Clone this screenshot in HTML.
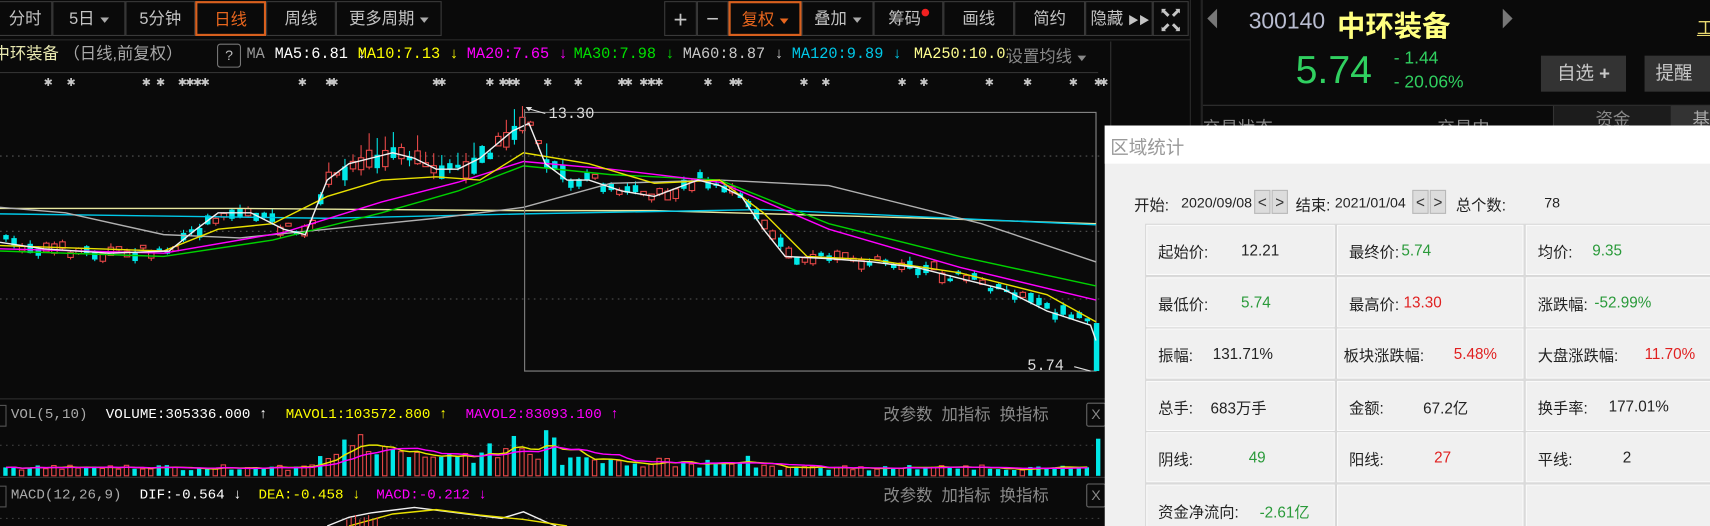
<!DOCTYPE html>
<html><head><meta charset="utf-8">
<style>
html,body{margin:0;padding:0;background:#0a0a0a;width:1710px;height:526px;overflow:hidden}
#s{position:absolute;left:0;top:0;width:1568px;height:482px;transform:scale(1.09056,1.09129);transform-origin:0 0;font-family:"Liberation Sans","Noto Sans CJK SC",sans-serif;background:#0a0a0a;overflow:hidden}
.a{position:absolute;white-space:nowrap}
.btn{position:absolute;top:1px;height:32px;border:1px solid #3a3a3a;color:#c4c4c4;font-size:15px;line-height:32px;text-align:center;box-sizing:border-box}
.mono{font-family:"Liberation Mono","Noto Sans CJK SC",monospace;font-size:13px}
.tri{display:inline-block;width:0;height:0;border-left:4px solid transparent;border-right:4px solid transparent;border-top:5px solid #aaa;vertical-align:middle;margin-left:5px}
.star{position:absolute;top:71px;color:#c8c8c8;font-size:10px;font-weight:bold;font-family:"DejaVu Sans",sans-serif}
.d{position:absolute;font-size:14px;color:#222}
.cell{position:absolute;box-sizing:border-box;border:1px solid #fbfbfb;outline:1px solid #d8d8d8;background:#f0f0f0}
.g{color:#2a9a3a}.r{color:#e02020}
.sb{position:absolute;top:174px;width:15px;height:22px;background:#dcdcdc;border:1px solid #b8b8b8;box-sizing:border-box;font-size:14px;line-height:20px;text-align:center;color:#333}
</style></head><body>
<div id="s">
<div class="btn" style="left:-2px;width:50px">分时</div>
<div class="btn" style="left:48px;width:67px">5日<span class="tri"></span></div>
<div class="btn" style="left:115px;width:64px">5分钟</div>
<div class="btn" style="left:179px;width:65px;border:2px solid #d8601e;color:#e8661e">日线</div>
<div class="btn" style="left:244px;width:64px">周线</div>
<div class="btn" style="left:308px;width:97px">更多周期<span class="tri"></span></div>
<div class="btn" style="left:609px;width:30px;font-size:22px">+</div>
<div class="btn" style="left:639px;width:29px;font-size:20px">−</div>
<div class="btn" style="left:668px;width:67px;border:2px solid #d8601e;color:#e8661e">复权<span class="tri" style="border-top-color:#e8661e"></span></div>
<div class="btn" style="left:735px;width:66px">叠加<span class="tri"></span></div>
<div class="btn" style="left:801px;width:64px">筹码<span style="display:inline-block;width:7px;height:7px;border-radius:50%;background:#f02020;vertical-align:top;margin-top:6px"></span></div>
<div class="btn" style="left:865px;width:65px">画线</div>
<div class="btn" style="left:930px;width:65px">简约</div>
<div class="btn" style="left:995px;width:62px;text-align:left;padding-left:4px">隐藏 <span style="font-size:10px">▶▶</span></div>
<div class="btn" style="left:1057px;width:33px;font-size:12px;line-height:14px;padding-top:2px">⬉⬈<br>⬋⬊</div>
<div class="a" style="left:0;top:36px;width:1092px;height:1px;background:#2a2a2a"></div>
<div class="a" style="left:1091px;top:0;width:1px;height:482px;background:#2a2a2a"></div>
<div class="a" style="left:1101px;top:0;width:2px;height:482px;background:#222"></div>
<div class="a" style="left:1018px;top:38px;width:1px;height:444px;background:#333"></div>
<div class="a" style="left:0;top:66px;width:1007px;height:1px;background:#333"></div>

<div class="a" style="left:-6px;top:40px;font-size:15px;color:#e8e8b0;line-height:20px">中环装备 <span style="color:#a8a8a8">（日线,前复权）</span></div>
<div class="a" style="left:199px;top:40px;width:20px;height:20px;border:1px solid #777;border-radius:3px;color:#bbb;font-size:13px;text-align:center;line-height:20px">?</div>
<div class="a mono" style="left:226px;top:42px;color:#999;font-size:14px">MA</div>
<div class="a mono" style="left:235px;top:42px;font-size:14px;color:#fff">&nbsp;&nbsp;MA5:6.81 ↓</div>
<div class="a mono" style="left:328px;top:42px;font-size:14px;color:#ffff00">MA10:7.13 ↓</div>
<div class="a mono" style="left:428px;top:42px;font-size:14px;color:#ff00ff">MA20:7.65 ↓</div>
<div class="a mono" style="left:526px;top:42px;font-size:14px;color:#00e000">MA30:7.98 ↓</div>
<div class="a mono" style="left:626px;top:42px;font-size:14px;color:#c8c8c8">MA60:8.87 ↓</div>
<div class="a mono" style="left:726px;top:42px;font-size:14px;color:#00c8e8">MA120:9.89 ↓</div>
<div class="a mono" style="left:838px;top:42px;font-size:14px;color:#ffff90;width:86px;overflow:hidden">MA250:10.02</div>
<div class="a" style="left:923px;top:41px;font-size:15px;color:#888">设置均线<span class="tri" style="border-top-color:#888"></span></div>

<div id="stars"></div>

<svg id="ch" class="a" style="left:0;top:0" width="1568" height="482" viewBox="0 0 1568 482"></svg>

<div class="a mono" style="left:503px;top:97px;color:#ddd;font-size:14px">13.30</div>
<div class="a mono" style="left:942px;top:328px;color:#ddd;font-size:14px">5.74</div>

<div class="a" style="left:0;top:365px;width:1018px;height:1px;background:#2e2e2e"></div>
<div class="a" style="left:-4px;top:371px;width:8px;height:18px;border:1px solid #555"></div>
<div class="a mono" style="left:10px;top:372px;color:#aaa">VOL(5,10)</div>
<div class="a mono" style="left:97px;top:372px;color:#fff">VOLUME:305336.000 ↑</div>
<div class="a mono" style="left:262px;top:372px;color:#ffff00">MAVOL1:103572.800 ↑</div>
<div class="a mono" style="left:427px;top:372px;color:#ff00ff">MAVOL2:83093.100 ↑</div>
<div class="a" style="left:810px;top:369px;color:#8a8a8a;font-size:15px">改参数&nbsp; 加指标&nbsp; 换指标</div>
<div class="a" style="left:996px;top:369px;width:16px;height:20px;border:1px solid #666;color:#888;font-size:13px;text-align:center;line-height:20px;border-radius:2px">X</div>

<div class="a" style="left:0;top:437px;width:1018px;height:1px;background:#2e2e2e"></div>
<div class="a" style="left:-4px;top:445px;width:8px;height:18px;border:1px solid #555"></div>
<div class="a mono" style="left:10px;top:446px;color:#aaa">MACD(12,26,9)</div>
<div class="a mono" style="left:128px;top:446px;color:#fff">DIF:-0.564 ↓</div>
<div class="a mono" style="left:237px;top:446px;color:#ffff00">DEA:-0.458 ↓</div>
<div class="a mono" style="left:345px;top:446px;color:#ff00ff">MACD:-0.212 ↓</div>
<div class="a" style="left:810px;top:443px;color:#8a8a8a;font-size:15px">改参数&nbsp; 加指标&nbsp; 换指标</div>
<div class="a" style="left:996px;top:443px;width:16px;height:20px;border:1px solid #666;color:#888;font-size:13px;text-align:center;line-height:20px;border-radius:2px">X</div>

<div class="a" style="left:1107px;top:8px;width:0;height:0;border-top:9px solid transparent;border-bottom:9px solid transparent;border-right:9px solid #777"></div>
<div class="a" style="left:1145px;top:8px;font-size:21px;color:#b8bcd0">300140</div>
<div class="a" style="left:1226px;top:4px;font-size:26px;font-weight:bold;color:#ffff80">中环装备</div>
<div class="a" style="left:1378px;top:8px;width:0;height:0;border-top:9px solid transparent;border-bottom:9px solid transparent;border-left:9px solid #777"></div>
<div class="a" style="left:1556px;top:12px;font-size:16px;color:#e8d870;text-decoration:underline">工</div>
<div class="a" style="left:1188px;top:43px;font-size:36px;color:#30d060">5.74</div>
<div class="a" style="left:1278px;top:43px;font-size:16px;color:#30d060;line-height:22px">- 1.44<br>- 20.06%</div>
<div class="a" style="left:1413px;top:51px;width:78px;height:33px;background:#333;color:#c8c8c8;font-size:17px;line-height:33px;text-align:center">自选 <b>+</b></div>
<div class="a" style="left:1508px;top:51px;width:70px;height:33px;background:#333;color:#c8c8c8;font-size:17px;line-height:33px;padding-left:10px">提醒</div>
<div class="a" style="left:1103px;top:96px;width:465px;height:1px;background:#333"></div>
<div class="a" style="left:1103px;top:104px;font-size:16px;color:#888;width:320px">交易状态<span style="position:absolute;left:215px">交易中</span></div>
<div class="a" style="left:1424px;top:97px;width:108px;height:20px;background:#1c1c1c;border-left:1px solid #333;color:#888;font-size:16px;text-align:center;line-height:28px">资金</div>
<div class="a" style="left:1532px;top:97px;width:60px;height:20px;background:#333;color:#aaa;font-size:16px;line-height:28px;padding-left:20px">基本</div>

<div class="a" style="left:1013px;top:115px;width:560px;height:370px;background:#f0f0f0">
  <div class="a" style="left:0;top:0;width:560px;height:35px;background:#fff"></div>
  <div class="a" style="left:5px;top:6px;font-size:17px;color:#999">区域统计</div>
</div>
<div class="d" style="left:1040px;top:178px">开始:</div>
<div class="d" style="left:1083px;top:178px;font-size:13px">2020/09/08</div>
<div class="sb" style="left:1150px">&lt;</div><div class="sb" style="left:1166px">&gt;</div>
<div class="d" style="left:1188px;top:178px">结束:</div>
<div class="d" style="left:1224px;top:178px;font-size:13px">2021/01/04</div>
<div class="sb" style="left:1295px">&lt;</div><div class="sb" style="left:1311px">&gt;</div>
<div class="d" style="left:1335px;top:178px">总个数:</div>
<div class="d" style="left:1416px;top:178px;font-size:13px">78</div>
<div id="grid"></div>
</div>
<script>
(function(){
var S=document.getElementById('ch'),h='';
function pl(p,c,w){h+='<polyline fill="none" stroke="'+c+'" stroke-width="'+(w||1.3)+'" points="'+p.map(function(q){return q[0].toFixed(1)+','+q[1].toFixed(1)}).join(' ')+'"/>';}
function interp(P,x){for(var j=1;j<P.length;j++){if(x<=P[j][0]){var a=P[j-1],b=P[j],t=(x-a[0])/(b[0]-a[0]);return a[1]+t*(b[1]-a[1]);}}return P[P.length-1][1];}
[143,212,274].forEach(function(y){h+='<line x1="0" x2="1010" y1="'+y+'" y2="'+y+'" stroke="#555" stroke-dasharray="1.5,4"/>';});
h+='<line x1="0" x2="1010" y1="408" y2="408" stroke="#444" stroke-dasharray="1.5,4"/>';
h+='<line x1="0" x2="1010" y1="475" y2="475" stroke="#444" stroke-dasharray="1.5,4"/>';
h+='<rect x="481" y="103" width="524" height="237" fill="none" stroke="#888" stroke-width="1"/>';
var MA5=[[0,222],[40,228],[100,232],[155,230],[180,210],[200,195],[230,195],[260,210],[280,215],[300,165],[320,150],[360,140],[380,145],[400,155],[420,155],[440,145],[470,120],[485,113],[500,150],[520,165],[540,165],[570,175],[600,180],[640,165],[660,170],[680,180],[700,210],[720,235],[760,237],[800,240],[840,245],[880,255],[920,265],[960,285],[1000,298],[1005,312]];
var sd=7;function R(){sd=(sd*16807)%2147483647;return sd/2147483647;}
var vols=[],vx=[];
for(var i=0;i<136;i++){var x=3+i*7.4;if(x>1000)break;var c=interp(MA5,x)+(R()-0.5)*10;
 var slope=interp(MA5,x+8)-interp(MA5,x-8);var up=R()<(slope>2?0.3:slope<-2?0.7:0.5);
 var hot=(x>280&&x<520);var bh=2+R()*(hot?14:7);var bt=c-bh/2,bb=c+bh/2;
 var hi=bt-R()*(hot?16:4),lo=bb+R()*(hot?6:3);
 var col=up?'#e84848':'#00e8e8';
 h+='<line x1="'+(x+2.5).toFixed(1)+'" x2="'+(x+2.5).toFixed(1)+'" y1="'+hi.toFixed(1)+'" y2="'+lo.toFixed(1)+'" stroke="'+col+'"/>';
 h+='<rect x="'+x.toFixed(1)+'" y="'+bt.toFixed(1)+'" width="5" height="'+bh.toFixed(1)+'" fill="'+(up?'#0a0a0a':col)+'" stroke="'+(up?col:'none')+'"/>';
 var v=5+R()*5;if(x>290&&x<380)v=14+R()*24;else if(x>380&&x<440)v=10+R()*12;else if(x>440&&x<510)v=14+R()*28;else if(x>510&&x<700)v=7+R()*12;
 vols.push(v);vx.push(x+2.5);
 h+='<rect x="'+x.toFixed(1)+'" y="'+(436-v).toFixed(1)+'" width="4" height="'+v.toFixed(1)+'" fill="'+(up?'none':col)+'" stroke="'+(up?col:'none')+'"/>';
}
h+='<rect x="1003" y="296" width="5" height="44" fill="#00e8e8"/>';
h+='<rect x="1005" y="402" width="4" height="34" fill="#00e8e8"/>';
function mav(n){var p=[];for(var k=0;k<vols.length;k++){var s=0,m=0;for(var j=Math.max(0,k-n+1);j<=k;j++){s+=vols[j];m++;}p.push([vx[k],436-s/m]);}return p;}
pl(mav(5),'#e8e800',1.3);pl(mav(10),'#ff00ff',1.3);
pl([[0,191],[220,191],[480,193],[600,193],[850,200],[1005,205]],'#e8e8a0');
pl([[0,196],[150,198],[300,200],[480,196],[700,192],[1005,206]],'#00c8e8');
pl([[0,190],[60,195],[150,215],[220,218],[300,210],[400,200],[480,190],[560,168],[660,165],[760,170],[900,205],[1005,240]],'#b0b0b0');
pl([[0,230],[150,235],[250,220],[350,195],[420,175],[480,152],[560,160],[660,165],[760,205],[880,235],[1005,262]],'#00d000');
pl([[0,228],[150,232],[260,213],[350,185],[420,167],[480,148],[560,155],[660,167],[760,210],[880,245],[1005,275]],'#ff00ff');
pl([[0,225],[150,230],[200,210],[250,205],[300,180],[350,165],[400,162],[440,165],[480,140],[540,150],[600,168],[660,165],[700,195],[740,235],[800,238],[880,250],[960,270],[1005,295]],'#e8e000');
pl(MA5,'#f0f0f0');
h+='<line x1="481" y1="100" x2="481" y2="340" stroke="#777"/>';
h+='<path d="M482 98 l6 0 l-3 4z" fill="#ddd"/><line x1="486" y1="100" x2="500" y2="104" stroke="#ddd"/>';
h+='<line x1="985" y1="336" x2="1000" y2="340" stroke="#ddd"/>';
pl([[300,482],[320,474],[340,470],[380,465],[420,470],[460,475],[480,469],[500,478],[510,482]],'#f0f0f0');
pl([[320,482],[360,471],[400,467],[440,472],[480,476],[520,482]],'#e8e000');
for(var k=0;k<8;k++)h+='<line x1="'+(318+k*4)+'" x2="'+(318+k*4)+'" y1="'+(476-k%3*2)+'" y2="482" stroke="#e84848"/>';
S.innerHTML=h;
var st='';[40,61,130,143,163,170,177,184,273,298,302,396,401,445,457,463,469,498,526,566,572,586,593,600,645,668,673,733,753,823,843,903,938,980,1003,1008].forEach(function(x){st+='<div class="star" style="left:'+x+'px">✱</div>';});
document.getElementById('stars').innerHTML=st;
var rows=[[['起始价:','12.21','',1138],['最终价:','5.74','g',1285],['均价:','9.35','g',1460]],
[['最低价:','5.74','g',1138],['最高价:','13.30','r',1287],['涨跌幅:','-52.99%','g',1462]],
[['振幅:','131.71%','',1112],['板块涨跌幅:','5.48%','r',1333],['大盘涨跌幅:','11.70%','r',1508]],
[['总手:','683万手','',1110],['金额:','67.2亿','',1305],['换手率:','177.01%','',1475]],
[['阴线:','49','g',1145],['阳线:','27','r',1315],['平线:','2','',1488]],
[['资金净流向:','-2.61亿','g',1155],['','','',0],['','','',0]]];
var cols=[1051,1226,1399],cw=[173,171,170],ry=[206,254,301,349,396,444],g='';
rows.forEach(function(r,ri){r.forEach(function(c,ci){var x=cols[ci],y=ry[ri];
 g+='<div class="cell" style="left:'+x+'px;top:'+y+'px;width:'+cw[ci]+'px;height:'+(ri==5?40:46)+'px"></div>';
 if(c[0]){g+='<div class="d" style="left:'+(x+(ci==1&&ri==2?6:11))+'px;top:'+(y+15)+'px">'+c[0]+'</div>';
 g+='<div class="d '+c[2]+'" style="left:'+c[3]+'px;top:'+(y+15)+'px">'+c[1]+'</div>';}});});
document.getElementById('grid').innerHTML=g;
})();
</script>
</body></html>
